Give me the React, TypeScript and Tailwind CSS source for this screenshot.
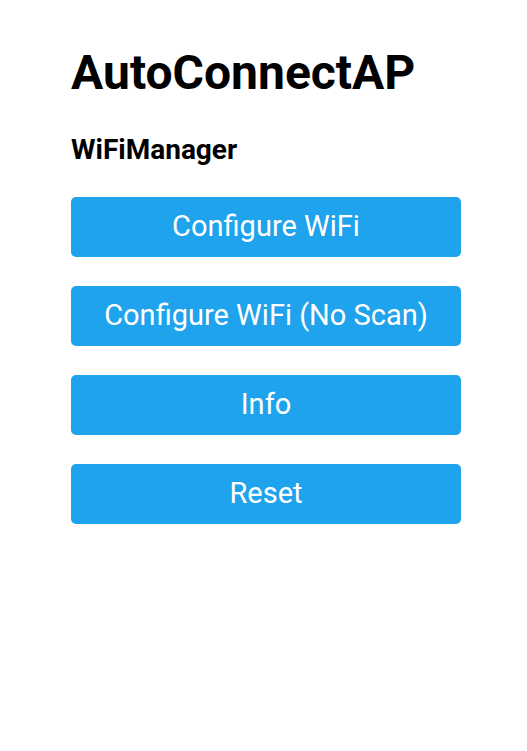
import React from 'react';

const buttons = ['Configure WiFi', 'Configure WiFi (No Scan)', 'Info', 'Reset'];

export default function App() {
  return (
    <div className="min-h-[751px] bg-white text-black" style={{ fontFamily: 'Roboto, "Liberation Sans", sans-serif' }}>
      <div className="ml-[71px] w-[390px] pt-[49px]">
        <h1 className="text-[48px] font-bold leading-[48px]">AutoConnectAP</h1>
        <h3 className="mt-[39px] text-[28px] font-bold leading-[28px]">WiFiManager</h3>
        <div className="mt-[33px] flex flex-col gap-[29px]">
          {buttons.map(label => (
            <button
              key={label}
              className="h-[60px] w-full rounded-[5px] bg-[#1fa3ec] text-[29px] text-white"
            >
              {label}
            </button>
          ))}
        </div>
      </div>
    </div>
  );
}
